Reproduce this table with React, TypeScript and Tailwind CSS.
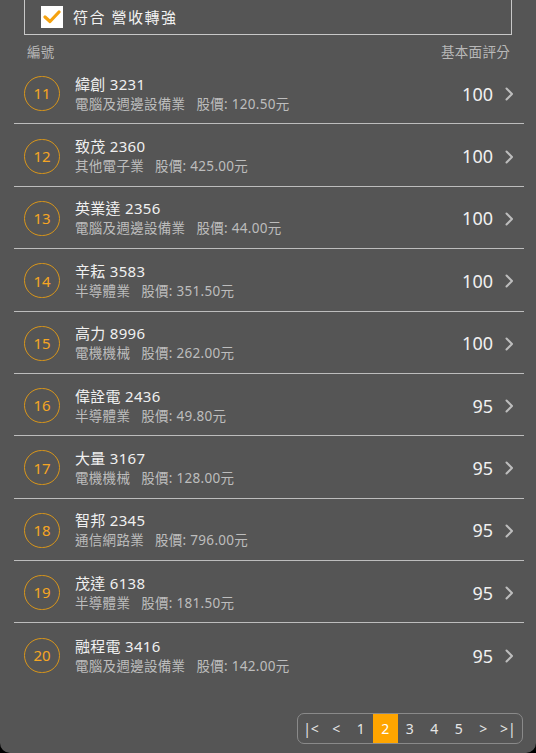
import React from 'react';

type Stock = {
  no: number;
  name: string;
  code: string;
  industry: string;
  price: string;
  score: number;
};

const stocks: Stock[] = [
  { no: 11, name: '緯創', code: '3231', industry: '電腦及週邊設備業', price: '120.50', score: 100 },
  { no: 12, name: '致茂', code: '2360', industry: '其他電子業', price: '425.00', score: 100 },
  { no: 13, name: '英業達', code: '2356', industry: '電腦及週邊設備業', price: '44.00', score: 100 },
  { no: 14, name: '辛耘', code: '3583', industry: '半導體業', price: '351.50', score: 100 },
  { no: 15, name: '高力', code: '8996', industry: '電機機械', price: '262.00', score: 100 },
  { no: 16, name: '偉詮電', code: '2436', industry: '半導體業', price: '49.80', score: 95 },
  { no: 17, name: '大量', code: '3167', industry: '電機機械', price: '128.00', score: 95 },
  { no: 18, name: '智邦', code: '2345', industry: '通信網路業', price: '796.00', score: 95 },
  { no: 19, name: '茂達', code: '6138', industry: '半導體業', price: '181.50', score: 95 },
  { no: 20, name: '融程電', code: '3416', industry: '電腦及週邊設備業', price: '142.00', score: 95 },
];

const pages = ['|<', '<', '1', '2', '3', '4', '5', '>', '>|'];

const Chevron = () => (
  <svg width="9" height="14" viewBox="0 0 9 14" fill="none">
    <path d="M1.5 1.5 L7 7 L1.5 12.5" stroke="#bdbdbd" strokeWidth="2" strokeLinecap="round" strokeLinejoin="round" />
  </svg>
);

export default function App() {
  return (
    <div className="w-[536px] h-[753px] bg-black overflow-hidden" style={{ fontFamily: '"Noto Sans", "Noto Sans CJK TC", sans-serif' }}>
      <div className="h-full bg-[#555555] rounded-b-[10px] flex flex-col">
        {/* filter box */}
        <div className="mx-[24px] h-[35px] border-x border-b border-[#c8c8c8] flex items-center pl-[16px] gap-[10px]">
          <div className="w-[22px] h-[22px] bg-white flex items-center justify-center">
            <svg width="18" height="14" viewBox="0 0 18 14" fill="none">
              <path d="M2 7 L7 11.5 L16 2" stroke="#f5a20f" strokeWidth="3.2" strokeLinecap="round" strokeLinejoin="round" />
            </svg>
          </div>
          <span className="text-[15px] text-[#f2f2f2] tracking-[1.5px]">符合 營收轉強</span>
        </div>

        {/* header */}
        <div className="flex justify-between items-center pl-[27px] pr-[26px] h-[27px] pt-[8px] text-[13.5px] tracking-[0.3px] text-[#b8b8b8]">
          <span>編號</span>
          <span>基本面評分</span>
        </div>

        {/* list */}
        <div className="ml-[14px] mr-[12px]">
          {stocks.map((s, i) => (
            <div
              key={s.no}
              className={`h-[62.375px] flex items-center pl-[10px] pr-[10px] ${i < stocks.length - 1 ? 'border-b border-[#bdbdbd]' : ''}`}
            >
              <div className="w-[36px] h-[35px] rounded-full border border-[#d9961a] flex items-center justify-center text-[15px] text-[#f5a623] shrink-0 mt-[2px]">
                {s.no}
              </div>
              <div className="ml-[15px] flex-1 min-w-0 flex flex-col mt-[2px]">
                <div className="text-[15px] leading-[20px] tracking-[0.3px] text-[#f0f0f0]">
                  {s.name} {s.code}
                </div>
                <div className="text-[13.5px] leading-[20px] tracking-[0.3px] text-[#bdbdbd]">
                  {s.industry}<span className="ml-[11px]">股價: {s.price}元</span>
                </div>
              </div>
              <div className="flex items-center gap-[12px] mt-[3px]">
                <span className="text-[18px] text-[#f0f0f0]">{s.score}</span>
                <Chevron />
              </div>
            </div>
          ))}
        </div>

        {/* pagination */}
        <div className="flex justify-end pr-[13px] mt-[27px]">
          <div className="flex h-[31px] border border-[#8a8a8a] rounded-[7px] pr-[2px] overflow-hidden">
            {pages.map((p, i) => (
              <div
                key={p}
                className={`${i === 0 ? 'w-[26px]' : 'w-[24.5px]'} h-full flex items-center justify-center text-[14px] ${p === '2' ? 'bg-[#ffa500] text-white' : 'text-[#e6e6e6]'}`}
              >
                {p}
              </div>
            ))}
          </div>
        </div>
      </div>
    </div>
  );
}
